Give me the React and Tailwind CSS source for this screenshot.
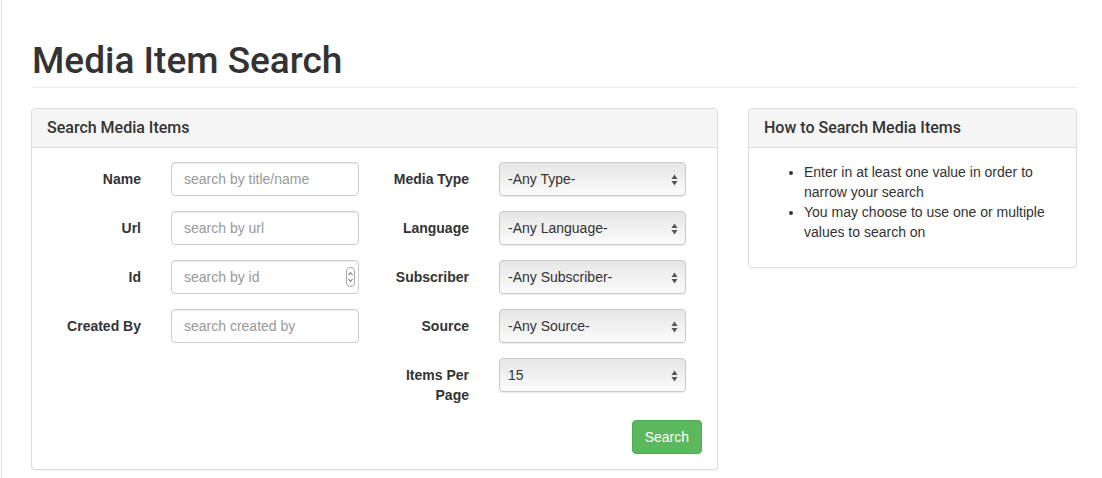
import React from "react";

const textFields = [
  { label: "Name", placeholder: "search by title/name" },
  { label: "Url", placeholder: "search by url" },
  { label: "Id", placeholder: "search by id", spinner: true },
  { label: "Created By", placeholder: "search created by" },
];

const selectFields = [
  { label: "Media Type", value: "-Any Type-" },
  { label: "Language", value: "-Any Language-" },
  { label: "Subscriber", value: "-Any Subscriber-" },
  { label: "Source", value: "-Any Source-" },
  { label: "Items Per Page", value: "15" },
];

const Spinner = () => (
  <div className="absolute right-[4px] top-[7px] flex h-[20px] w-[9px] flex-col items-center justify-center rounded-[4px] border border-[#aaa] bg-white">
    <svg width="7" height="16" viewBox="0 0 7 16" fill="none" stroke="#555" strokeWidth="1">
      <path d="M1.5 6 L3.5 3.5 L5.5 6" />
      <path d="M1.5 10 L3.5 12.5 L5.5 10" />
    </svg>
  </div>
);

const SelectArrows = () => (
  <svg width="7" height="12" viewBox="0 0 7 12" className="absolute right-[7px] top-[11px]">
    <path d="M3.5 0.5 L6.5 5 L0.5 5 Z" fill="#555" />
    <path d="M0.5 7 L6.5 7 L3.5 11.5 Z" fill="#555" />
  </svg>
);

const TextRow = ({ label, placeholder, spinner }) => (
  <div className="mb-[15px] flex items-start">
    <label className="w-[94px] pt-[7px] text-right text-[14px] font-bold leading-[20px] text-[#333]">
      {label}
    </label>
    <div className="relative ml-[30px] w-[188px]">
      <input
        type="text"
        placeholder={placeholder}
        className="h-[34px] w-full rounded-[4px] border border-[#ccc] bg-white px-[12px] text-[14px] text-[#555] shadow-[inset_0_1px_1px_rgba(0,0,0,0.075)] outline-none placeholder:text-[#999]"
      />
      {spinner && <Spinner />}
    </div>
  </div>
);

const SelectRow = ({ label, value }) => (
  <div className="mb-[15px] flex items-start">
    <label className="w-[80px] pt-[7px] text-right text-[14px] font-bold leading-[20px] text-[#333]">
      {label}
    </label>
    <div className="relative ml-[30px] flex h-[34px] w-[187px] items-center rounded-[4px] border border-[#c9c9c9] bg-gradient-to-b from-[#e6e6e6] to-[#fbfbfb] pl-[8px] text-[14px] text-[#333] shadow-[0_1px_1px_rgba(0,0,0,0.08)]">
      {value}
      <SelectArrows />
    </div>
  </div>
);

const Panel = ({ title, className, children }) => (
  <div className={`rounded-[4px] border border-[#ddd] bg-white shadow-[0_1px_1px_rgba(0,0,0,0.05)] ${className}`}>
    <div className="rounded-t-[4px] border-b border-[#ddd] bg-[#f5f5f5] px-[15px] py-[10px] font-['Roboto',Arial,sans-serif] text-[16px] font-medium leading-[18px] text-[#333]">
      {title}
    </div>
    <div className="px-[15px] pb-[15px] pt-[14px]">{children}</div>
  </div>
);

export default function App() {
  return (
    <div className="min-h-[478px] bg-white font-['Liberation_Sans',Arial,sans-serif] text-[#333]">
      <div className="ml-[1px] min-h-[478px] border-l border-[#e3e3e3] pl-[29px] pr-[24px]">
        <h1 className="mb-[20px] border-b border-[#eee] pb-[6px] pt-[40px] pl-[1px] font-['Roboto',Arial,sans-serif] text-[37px] font-medium leading-[41px] text-[#333]">
          Media Item Search
        </h1>

        <div className="flex items-start gap-[30px]">
          <Panel title="Search Media Items" className="w-[687px]">
            <div className="flex">
              <div>
                {textFields.map((f) => (
                  <TextRow key={f.label} {...f} />
                ))}
              </div>
              <div className="ml-[30px]">
                {selectFields.map((f) => (
                  <SelectRow key={f.label} {...f} />
                ))}
              </div>
            </div>
            <div className="flex justify-end">
              <button className="h-[34px] rounded-[4px] border border-[#4cae4c] bg-[#5cb85c] px-[12px] text-[14px] text-white">
                Search
              </button>
            </div>
          </Panel>

          <Panel title="How to Search Media Items" className="w-[329px]">
            <ul className="mb-[10px] list-disc pl-[40px] text-[14px] leading-[20px] text-[#333]">
              <li>Enter in at least one value in order to narrow your search</li>
              <li>You may choose to use one or multiple values to search on</li>
            </ul>
          </Panel>
        </div>
      </div>
    </div>
  );
}
